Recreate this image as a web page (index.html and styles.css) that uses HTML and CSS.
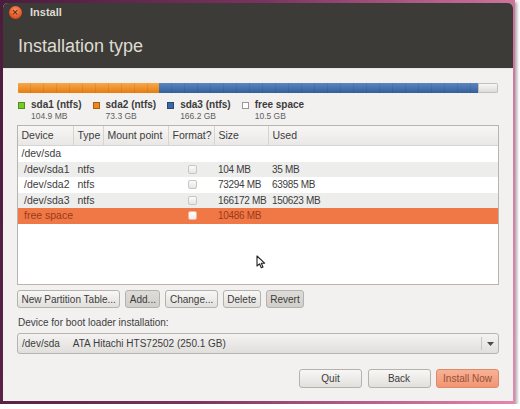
FILE: index.html
```html
<!DOCTYPE html>
<html lang="en">
<head>
    <meta charset="UTF-8">
    <title>Install</title>
    <link rel="stylesheet" href="styles.css">
</head>
<body>

<div class="shot">
    <div class="window">
        <div class="titlebar">
            <div class="title-row">
                <span class="close">&times;</span>
                <span class="title">Install</span>
            </div>
            <h1>Installation type</h1>
        </div>

        <div class="content">
            <div class="usage-bar">
                <div class="seg seg-sda1" style="width: 0.04%"></div>
                <div class="seg seg-sda2" style="width: 29.31%"></div>
                <div class="seg seg-sda3" style="width: 66.45%"></div>
                <div class="seg seg-free" style="width: 4.2%"></div>
            </div>

            <div class="legend">
                <div class="legend-item">
                    <span class="swatch sw-sda1"></span>
                    <span class="legend-name">sda1 (ntfs)</span>
                    <span class="legend-size">104.9 MB</span>
                </div>
                <div class="legend-item">
                    <span class="swatch sw-sda2"></span>
                    <span class="legend-name">sda2 (ntfs)</span>
                    <span class="legend-size">73.3 GB</span>
                </div>
                <div class="legend-item">
                    <span class="swatch sw-sda3"></span>
                    <span class="legend-name">sda3 (ntfs)</span>
                    <span class="legend-size">166.2 GB</span>
                </div>
                <div class="legend-item">
                    <span class="swatch sw-free"></span>
                    <span class="legend-name">free space</span>
                    <span class="legend-size">10.5 GB</span>
                </div>
            </div>

            <div class="table">
                <div class="thead">
                    <div class="th">Device</div>
                    <div class="th">Type</div>
                    <div class="th">Mount point</div>
                    <div class="th">Format?</div>
                    <div class="th">Size</div>
                    <div class="th">Used</div>
                </div>
                <div class="row">
                    <div class="td">/dev/sda</div>
                    <div class="td"></div>
                    <div class="td"></div>
                    <div class="td"></div>
                    <div class="td"></div>
                    <div class="td"></div>
                </div>
                <div class="row alt">
                    <div class="td child">/dev/sda1</div>
                    <div class="td">ntfs</div>
                    <div class="td"></div>
                    <div class="td check-cell"><span class="check"></span></div>
                    <div class="td num">104 MB</div>
                    <div class="td num">35 MB</div>
                </div>
                <div class="row">
                    <div class="td child">/dev/sda2</div>
                    <div class="td">ntfs</div>
                    <div class="td"></div>
                    <div class="td check-cell"><span class="check"></span></div>
                    <div class="td num">73294 MB</div>
                    <div class="td num">63985 MB</div>
                </div>
                <div class="row alt">
                    <div class="td child">/dev/sda3</div>
                    <div class="td">ntfs</div>
                    <div class="td"></div>
                    <div class="td check-cell"><span class="check"></span></div>
                    <div class="td num">166172 MB</div>
                    <div class="td num">150623 MB</div>
                </div>
                <div class="row selected">
                    <div class="td child">free space</div>
                    <div class="td"></div>
                    <div class="td"></div>
                    <div class="td check-cell"><span class="check"></span></div>
                    <div class="td num">10486 MB</div>
                    <div class="td"></div>
                </div>

                <svg class="pointer" width="10" height="14" viewBox="0 0 10 14">
                    <path d="M1 1 L1 11 L3.5 8.8 L5.3 12.8 L7 12 L5.3 8.2 L8.6 8.2 Z" fill="#fff" stroke="#222" stroke-width="1.1" stroke-linejoin="round"/>
                </svg>
            </div>

            <div class="actions">
                <button class="btn">New Partition Table...</button>
                <button class="btn pressed">Add...</button>
                <button class="btn">Change...</button>
                <button class="btn">Delete</button>
                <button class="btn pressed">Revert</button>
            </div>

            <div class="boot-label">Device for boot loader installation:</div>
            <div class="combo">
                <span class="combo-dev">/dev/sda</span>
                <span class="combo-name">ATA Hitachi HTS72502 (250.1 GB)</span>
                <span class="combo-arrow">
                    <svg width="7" height="4" viewBox="0 0 7 4"><path d="M0 0 L7 0 L3.5 4 Z" fill="#4a4a48"/></svg>
                </span>
            </div>

            <div class="footer">
                <button class="btn wide">Quit</button>
                <button class="btn wide">Back</button>
                <button class="btn wide primary">Install Now</button>
            </div>
        </div>
    </div>
</div>

</body>
</html>
```

FILE: styles.css
```css
body {
    margin: 0;
    background: #fff;
    font-family: "Liberation Sans", Arial, sans-serif;
    color: #3c3c3c;
}

.shot {
    width: 515px;
    height: 404px;
    box-sizing: border-box;
    padding: 3px 2px 3px 3px;
    background: linear-gradient(100deg, #4b1c3d 0%, #7a3360 45%, #e886ad 100%);
    box-shadow: 2px 2px 3px rgba(0, 0, 0, 0.35);
}

.window {
    height: 398px;
    background: #f2f1f0;
    border-radius: 5px 5px 0 0;
    overflow: hidden;
    display: flex;
    flex-direction: column;
}

.titlebar {
    height: 66px;
    box-sizing: border-box;
    background: #3c3b37;
    border-bottom: 1px solid #e9e8e6;
}

.title-row {
    height: 18.5px;
    padding-left: 5.5px;
    display: flex;
    align-items: center;
}

.close {
    width: 13px;
    height: 13px;
    border-radius: 50%;
    background: radial-gradient(circle at 50% 35%, #fb9165, #df4a17 75%);
    color: #3b1c0e;
    font-size: 11px;
    line-height: 13px;
    text-align: center;
    margin-right: 8.5px;
}

.title {
    font-size: 11px;
    font-weight: bold;
    color: #dfdbd2;
}

h1 {
    margin: 15.2px 0 0;
    padding-left: 15px;
    font-size: 18px;
    font-weight: normal;
    line-height: 18px;
    color: #dfdbd2;
}

.content {
    padding: 14px 14px 0;
}

.usage-bar {
    height: 10px;
    margin: 0 1px;
    display: flex;
    border-radius: 2px;
    overflow: hidden;
    box-shadow: inset 0 -1px 0 rgba(0, 0, 0, 0.15);
}

.seg {
    height: 100%;
    background-image: repeating-linear-gradient(90deg, transparent 0 12px, rgba(0, 0, 0, 0.07) 12px 13px);
}

.seg-sda1 {
    background-color: #6fc51f;
}

.seg-sda2 {
    background-color: #ee8a1f;
    background-image: repeating-linear-gradient(90deg, transparent 0 12px, rgba(0, 0, 0, 0.07) 12px 13px),
        linear-gradient(#f7a94a, #e57d12);
}

.seg-sda3 {
    background-color: #3f6ba8;
    background-image: repeating-linear-gradient(90deg, transparent 0 12px, rgba(0, 0, 0, 0.07) 12px 13px),
        linear-gradient(#5b86c0, #335f9c);
}

.seg-free {
    background: linear-gradient(#f6f6f5, #dddcda);
    border: 1px solid #c2c0bc;
    box-sizing: border-box;
}

.legend {
    display: flex;
    gap: 11px;
    margin: 6px 0 0 1px;
}

.legend-item {
    display: grid;
    grid-template-columns: 7px auto;
    column-gap: 6px;
    align-items: center;
}

.swatch {
    width: 7px;
    height: 7px;
    box-sizing: border-box;
    border: 1px solid rgba(0, 0, 0, 0.3);
}

.sw-sda1 { background: #75cc22; }
.sw-sda2 { background: #f0871c; }
.sw-sda3 { background: #3b67a6; }
.sw-free { background: #fff; border-color: #9a9894; }

.legend-name {
    font-size: 10px;
    font-weight: bold;
    line-height: 12px;
}

.legend-size {
    grid-column: 2;
    font-size: 8.5px;
    line-height: 10px;
    color: #5e5e5e;
}

.table {
    position: relative;
    height: 160px;
    margin-top: 4px;
    box-sizing: border-box;
    border: 1px solid #b8b5b0;
    background: #fff;
}

.thead,
.row {
    display: grid;
    grid-template-columns: 56px 30px 65px 46px 54px 1fr;
}

.thead {
    height: 20px;
    box-sizing: border-box;
    background: linear-gradient(#f7f6f5, #e9e8e6);
    border-bottom: 1px solid #d6d4d0;
}

.th {
    padding-left: 3.5px;
    font-size: 10.5px;
    line-height: 19px;
    border-right: 1px solid #d6d4d0;
    white-space: nowrap;
}

.th:last-child {
    border-right: none;
}

.row {
    height: 15.5px;
    font-size: 10.5px;
    line-height: 15.5px;
}

.row.alt {
    background: #ededec;
}

.row.selected {
    background: #f07746;
    color: #9a3c16;
}

.td {
    padding-left: 3.5px;
    white-space: nowrap;
}

.td.child {
    padding-left: 6px;
}

.td.num {
    font-size: 10px;
    letter-spacing: -0.3px;
    padding-left: 3px;
}

.check-cell {
    padding: 0;
    display: flex;
    align-items: center;
    justify-content: center;
}

.check {
    width: 9px;
    height: 9px;
    box-sizing: border-box;
    border: 1px solid #c9c6c1;
    border-radius: 2px;
    background: linear-gradient(#fbfbfa, #e7e6e4);
}

.selected .check {
    border-color: #f3b59a;
    background: linear-gradient(#fff, #f4ece8);
}

.pointer {
    position: absolute;
    left: 238px;
    top: 129px;
}

.actions {
    display: flex;
    gap: 5px;
    margin-top: 5px;
}

.btn {
    height: 18px;
    padding: 0 3.5px;
    border: 1px solid #b5b2ad;
    border-radius: 3px;
    background: linear-gradient(#f8f7f6, #e2e0dc);
    font-family: "Liberation Sans", Arial, sans-serif;
    font-size: 10px;
    color: #3c3c3c;
    cursor: pointer;
}

.btn.pressed {
    background: linear-gradient(#dedcd8, #d1cfca);
}

.boot-label {
    margin-top: 9px;
    padding-left: 1px;
    font-size: 10px;
    line-height: 12px;
}

.combo {
    height: 21px;
    margin-top: 4px;
    box-sizing: border-box;
    border: 1px solid #b7b4af;
    border-radius: 3px;
    background: linear-gradient(#f4f3f2, #e1dfdc);
    display: flex;
    align-items: center;
    padding-left: 4px;
    font-size: 10px;
}

.combo-dev {
    margin-right: 13px;
}

.combo-arrow {
    margin-left: auto;
    width: 16px;
    height: 13px;
    border-left: 1px solid #c9c6c1;
    display: flex;
    align-items: center;
    justify-content: center;
}

.footer {
    display: flex;
    justify-content: flex-end;
    gap: 5.5px;
    margin-top: 15px;
}

.btn.wide {
    width: 63px;
    height: 19px;
}

.btn.primary {
    background: linear-gradient(#f8b194, #f19673);
    border-color: #e0896a;
    color: #95503a;
}
```
